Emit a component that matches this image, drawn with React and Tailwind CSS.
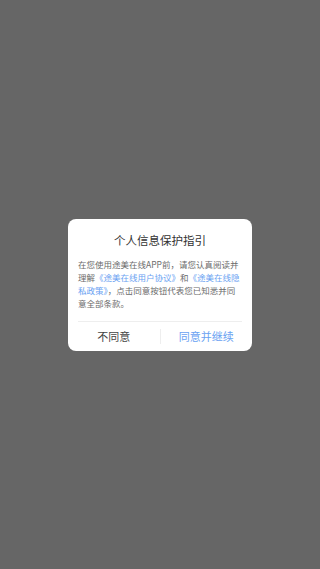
export default function App() {
  return (
    <div
      className="w-full h-[569px] bg-[#666666] flex items-center justify-center"
      style={{ fontFamily: '"Noto Sans CJK SC", "Noto Sans", sans-serif' }}
    >
      <div className="w-[184px] bg-white rounded-[8px] pt-[14px] flex flex-col">
        <div className="text-center text-[11.5px] leading-[14px] text-[#333333]">个人信息保护指引</div>
        <div className="mt-[11px] px-[10px] text-[8.5px] leading-[13px] text-[#6b6b6b] break-all">
          在您使用途美在线APP前，请您认真阅读并<br />
          理解<span className="text-[#6aa2f2]">《途美在线用户协议》</span>和<span className="text-[#6aa2f2]">《途美在线隐<br />私政策》</span>，点击同意按钮代表您已知悉并同<br />
          意全部条款。
        </div>
        <div className="mt-[11px] mx-[10px] h-px bg-[#eeeeee]" />
        <div className="h-[29px] flex items-center">
          <div className="flex-1 text-center text-[11px] text-[#444444]">不同意</div>
          <div className="w-px h-[15px] bg-[#eeeeee]" />
          <div className="flex-1 text-center text-[11px] text-[#6aa2f2]">同意并继续</div>
        </div>
      </div>
    </div>
  );
}
